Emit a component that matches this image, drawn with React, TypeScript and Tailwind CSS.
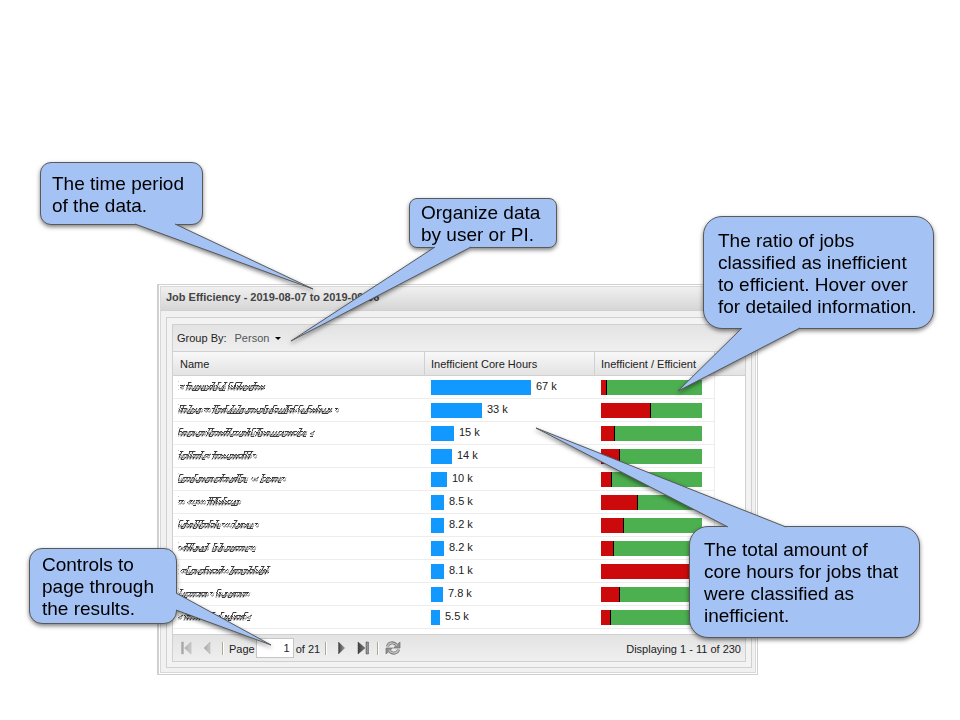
import React from "react";

type Span = [number, number];

type Row = {
  id: number;
  words: Span[];
  hours: string;
  bar: number;
  bad: number;
};

const rows: Row[] = [
  { id: 1, words: [[2, 5], [8, 36], [38, 47], [50, 86]], hours: "67 k", bar: 100, bad: 5 },
  { id: 2, words: [[0, 24], [26, 30], [34, 56], [58, 118], [120, 153], [157, 159]], hours: "33 k", bar: 51, bad: 49 },
  { id: 3, words: [[0, 25], [28, 74], [77, 128], [132, 134]], hours: "15 k", bar: 23, bad: 13 },
  { id: 4, words: [[0, 26], [28, 31], [34, 72], [75, 77]], hours: "14 k", bar: 21, bad: 18 },
  { id: 5, words: [[0, 68], [73, 79], [82, 102], [104, 106]], hours: "10 k", bar: 16, bad: 10 },
  { id: 6, words: [[0, 6], [9, 16], [18, 26], [29, 62]], hours: "8.5 k", bar: 13, bad: 36 },
  { id: 7, words: [[0, 42], [44, 52], [54, 74], [77, 79]], hours: "8.2 k", bar: 13, bad: 22 },
  { id: 8, words: [[0, 4], [6, 30], [34, 68], [71, 77]], hours: "8.2 k", bar: 13, bad: 12 },
  { id: 9, words: [[2, 6], [8, 42], [44, 48], [51, 88]], hours: "8.1 k", bar: 13, bad: 100 },
  { id: 10, words: [[0, 30], [32, 35], [38, 66], [68, 70]], hours: "7.8 k", bar: 12, bad: 18 },
  { id: 11, words: [[0, 3], [6, 22], [26, 66], [69, 71]], hours: "5.5 k", bar: 9, bad: 9 },
];

/* A name blurred into short slanted strokes so that it cannot be read. */
function ScrubbedName({ seed, words }: { seed: number; words: Span[] }) {
  let state = seed * 7919 + 13;
  const next = () => {
    state = (state * 1103515245 + 12345) % 2147483648;
    return state / 2147483648;
  };
  let dark = "";
  let soft = "";
  for (const [from, to] of words) {
    const wide = to - from > 8;
    for (let x = from; x < to; x += 3) {
      const tall = wide && (next() > 0.8 || x === from);
      const top = tall ? 2.5 : 5;
      const bottom = wide ? 10.5 : 8;
      const lean = 2 + Math.round(next() * 3);
      dark += `M${x + lean} ${top}L${x} ${bottom}`;
      const pick = next();
      if (pick > 0.6) dark += `M${x} 5.500h3`;
      else if (pick > 0.3) dark += `M${x} 10.500h3`;
      else if (wide) dark += `M${x} 5l4 4`;
      if (tall) dark += `M${x + 2} 2.500h4`;
      soft += `M${x + 1} 8.500h3M${x + 4} 5.500L${x + 2} 10`;
    }
  }
  return (
    <svg role="img" aria-label="Name hidden" className="block h-[14px] w-[170px]" viewBox="0 0 170 14">
      <path d={soft} stroke="#a8a8a8" strokeWidth="1" fill="none" />
      <path d={dark} stroke="#3a3a3a" strokeWidth="1" strokeDasharray="3 0.600" fill="none" />
      <path d="M0.5 1v12" stroke="#c8c8c8" strokeDasharray="1 3" />
    </svg>
  );
}

function Callout({ place, round, pad, tail, children }: {
  place: string;
  round: string;
  pad: string;
  tail: [Span, Span, Span];
  children: React.ReactNode;
}) {
  const points = tail.map((p) => p.join(",")).join(" ");
  return (
    <aside className={`absolute drop-shadow-[0_2px_2px_rgba(0,0,0,0.5)] ${place}`}>
      <div className={`size-full border border-[#595959] bg-[#a4c2f4] ${round}`} />
      <svg className="pointer-events-none absolute top-0 left-0 size-full overflow-visible" aria-hidden="true">
        <polygon points={points} fill="#a4c2f4" />
        <polyline points={points} fill="none" stroke="#595959" strokeLinejoin="bevel" />
      </svg>
      <p className={`absolute inset-0 flex items-center pt-[2px] text-[19px] leading-[22px] whitespace-nowrap text-black ${pad}`}>
        <span>{children}</span>
      </p>
    </aside>
  );
}

function Separator() {
  return <span className="h-[13px] w-[2px] border-r border-l border-r-white border-l-[#aca899]" />;
}

function PagerButton({ label, disabled, children }: { label: string; disabled?: boolean; children: React.ReactNode }) {
  return (
    <button type="button" aria-label={label} disabled={disabled} className="flex size-[16px] items-center justify-center">
      <svg viewBox="0 0 16 16" className={disabled ? "size-[16px] opacity-40" : "size-[16px]"}>
        {children}
      </svg>
    </button>
  );
}

export default function App() {
  const head = "h-[24px] border-b border-[#d0d0d0] p-0 pt-px text-left font-normal";
  return (
    <main className="relative min-h-screen overflow-hidden bg-white pt-[284px] pr-[202px] pb-[46px] pl-[157px] font-['Liberation_Sans',Arial,sans-serif] text-[11px] leading-[14px] text-[#222]">
      <svg className="absolute size-0" aria-hidden="true">
        <defs>
          <linearGradient id="metal" x1="0" y1="0" x2="1" y2="0">
            <stop offset="0" stopColor="#3c3c3c" />
            <stop offset="1" stopColor="#a0a0a0" />
          </linearGradient>
        </defs>
      </svg>

      <section className="border border-l-2 border-[#d0d0d0] bg-white p-px">
        <div className="border border-[#d8d8d8] bg-[#f1f1f1]">
          <h1 className="flex h-[24px] items-center border-b border-[#d0d0d0] bg-linear-to-b from-[#f0f0f0] to-[#d6d6d6] pb-[4px] pl-[5px] font-bold whitespace-nowrap text-[#444]">
            Job Efficiency - 2019-08-07 to 2019-09-06
          </h1>
          <div className="pt-[6px] pr-[3px] pb-[4px] pl-[5px]">
            <div className="border border-[#d0d0d0] bg-[#f3f3f3] p-[5px] pt-[6px]">
              <div className="border border-[#d0d0d0] bg-white">
                <div className="flex h-[27px] items-center gap-[8px] border-b border-[#d0d0d0] bg-linear-to-b from-[#e3e3e3] to-[#efefef] pl-[4px]">
                  <label htmlFor="group">Group By:</label>
                  <div className="flex items-center gap-[2px] text-[#555]">
                    <select id="group" className="w-[38px] appearance-none bg-transparent p-0" defaultValue="Person">
                      <option>Person</option>
                      <option>PI</option>
                    </select>
                    <svg viewBox="0 0 6 3" className="h-[3px] w-[6px]" aria-hidden="true">
                      <path d="M0 0h6L3 3z" fill="#000" />
                    </svg>
                  </div>
                </div>

                <table className="w-full table-fixed border-separate border-spacing-0">
                  <colgroup>
                    <col className="w-[252px]" />
                    <col className="w-[170px]" />
                    <col className="w-[120px]" />
                    <col />
                  </colgroup>
                  <thead>
                    <tr className="bg-linear-to-b from-[#f8f8f8] to-[#e2e2e2]">
                      <th className={`${head} border-r pl-[7px]`}>Name</th>
                      <th className={`${head} border-r pl-[6px]`}>Inefficient Core Hours</th>
                      <th className={`${head} border-r pl-[6px]`}>Inefficient / Efficient</th>
                      <td className={head} />
                    </tr>
                  </thead>
                  <tbody>
                    {rows.map((row) => (
                      <tr key={row.id}>
                        <td className="h-[23px] border-b border-[#ededed] p-0 pl-[5px]">
                          <ScrubbedName seed={row.id} words={row.words} />
                        </td>
                        <td className="h-[23px] border-b border-[#ededed] p-0 pl-[6px]">
                          <div className="flex gap-[5px] leading-[12px]">
                            <span className="h-[15px] bg-[#1199ff]" style={{ width: row.bar }} />
                            <span>{row.hours}</span>
                          </div>
                        </td>
                        <td className="h-[23px] border-r border-b border-[#ededed] p-0 pl-[6px]">
                          <div className="flex h-[15px] w-[101px] bg-[#4caf50]">
                            <span className="border-r border-black bg-[#cc0a0c]" style={{ width: row.bad + 1 }} />
                          </div>
                        </td>
                        <td />
                      </tr>
                    ))}
                  </tbody>
                </table>

                <footer className="mt-[5px] flex h-[27px] items-center border-t border-[#d0d0d0] bg-linear-to-b from-[#e3e3e3] to-[#efefef] pr-[4px] pl-[5px] whitespace-nowrap">
                  <div className="flex items-center gap-[5px]">
                    <PagerButton label="First page" disabled>
                      <path d="M3.500 2h2v12h-2zM13 2v12L6.500 8z" fill="url(#metal)" stroke="#555" strokeWidth="0.500" />
                    </PagerButton>
                    <PagerButton label="Previous page" disabled>
                      <path d="M11 2v12L5 8z" fill="url(#metal)" stroke="#555" strokeWidth="0.500" />
                    </PagerButton>
                    <span className="flex pl-[2px]"><Separator /></span>
                    <label htmlFor="page" className="pt-[2px]">Page</label>
                  </div>
                  <input id="page" defaultValue="1" className="ml-px h-[20px] w-[38px] border border-[#c6c6c6] bg-white pr-[3px] text-right" />
                  <span className="pt-[2px] pr-[5px] pl-[2px]">of 21</span>
                  <Separator />
                  <div className="flex items-center gap-[6px] px-[6px]">
                    <PagerButton label="Next page">
                      <path d="M5.500 2v12l6-6z" fill="url(#metal)" stroke="#555" strokeWidth="0.500" />
                    </PagerButton>
                    <PagerButton label="Last page">
                      <path d="M3 2v12l7-6zM11 2h2.500v12H11z" fill="url(#metal)" stroke="#444" strokeWidth="0.500" />
                    </PagerButton>
                  </div>
                  <Separator />
                  <div className="pl-[6px]">
                    <PagerButton label="Refresh">
                      <path d="M2.500 6.500C3.500 2.500 8.500 1.500 11.500 5M13.500 9.500c-1 4-6 5-9 1.500" fill="none" stroke="#707070" strokeWidth="3" />
                      <path d="M15 2v6H8.500zM1 14V8h6.500z" fill="#909090" stroke="#707070" strokeWidth="0.700" />
                      <path d="M2.500 6.500C3.500 2.500 8.500 1.500 12 5.500M13.500 9.500c-1 4-6 5-9.500 1" fill="none" stroke="#c4c4c4" strokeWidth="1.300" />
                    </PagerButton>
                  </div>
                  <span className="ml-auto pt-[2px]">Displaying 1 - 11 of 230</span>
                </footer>
              </div>
            </div>
          </div>
        </div>
      </section>

      <Callout place="top-[162px] left-[40px] h-[63px] w-[163px]" round="rounded-[11px]" pad="pl-[12px]" tail={[[95, 62], [273, 127], [135, 62]]}>
        The time period<br />of the data.
      </Callout>
      <Callout place="top-[198px] left-[409px] h-[50px] w-[148px]" round="rounded-[8px]" pad="pl-[12px]" tail={[[26, 49], [-118, 143], [62, 49]]}>
        Organize data<br />by user or PI.
      </Callout>
      <Callout place="top-[216px] left-[703px] h-[113px] w-[231px]" round="rounded-[19px]" pad="pl-[15px]" tail={[[39, 112], [-25, 175], [97, 112]]}>
        The ratio of jobs<br />classified as inefficient<br />to efficient. Hover over<br />for detailed information.
      </Callout>
      <Callout place="top-[526px] left-[689px] h-[112px] w-[231px]" round="rounded-[19px]" pad="pl-[15px]" tail={[[39, 1], [-153, -98], [97, 1]]}>
        The total amount of<br />core hours for jobs that<br />were classified as<br />inefficient.
      </Callout>
      <Callout place="top-[548px] left-[29px] h-[76px] w-[148px]" round="rounded-[13px]" pad="pl-[13px]" tail={[[147, 45], [242, 97], [147, 62]]}>
        Controls to<br />page through<br />the results.
      </Callout>
    </main>
  );
}
